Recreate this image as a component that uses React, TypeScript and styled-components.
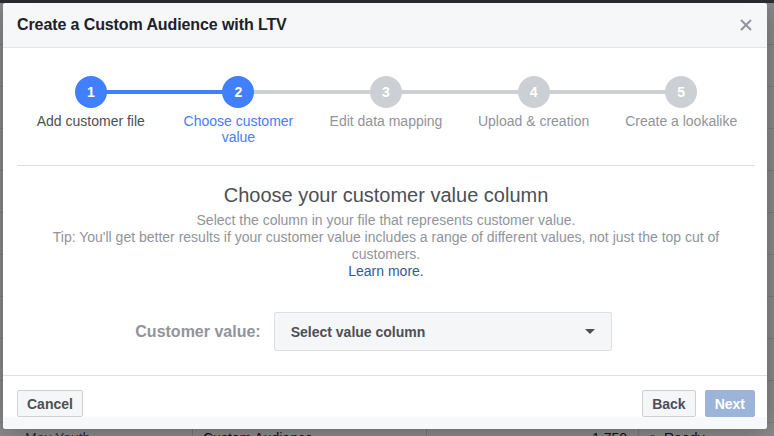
import React from "react";
import styled, { createGlobalStyle, css } from "styled-components";

type StepState = "done" | "active" | "todo";

const steps: { label: string; state: StepState }[] = [
  { label: "Add customer file", state: "done" },
  { label: "Choose customer value", state: "active" },
  { label: "Edit data mapping", state: "todo" },
  { label: "Upload & creation", state: "todo" },
  { label: "Create a lookalike", state: "todo" },
];

const backgroundRows = [
  "Lookalike (US, 1%)",
  "Website Visitors",
  "Newsletter list",
  "Lookalike (US, 2%)",
  "Customers 2017",
  "App installers",
  "Cart abandoners",
  "Lookalike (CA, 1%)",
  "Video viewers",
  "Page engagers",
];

const App = () => {
  return (
    <>
      <GlobalStyle />
      <Page>
        <TopNav />
        <Table>
          {backgroundRows.map((name) => (
            <TableRow key={name}>
              <NameCell>{name}</NameCell>
              <Cell>Custom Audience</Cell>
              <NumberCell>2,400</NumberCell>
              <Cell>Ready</Cell>
            </TableRow>
          ))}
          <TableRow>
            <NameCell>May Youth</NameCell>
            <Cell>Custom Audience</Cell>
            <NumberCell>1,750</NumberCell>
            <Cell>
              <StatusDot />
              Ready
            </Cell>
          </TableRow>
        </Table>
        <Overlay />

        <Modal>
          <Header>
            <Title>Create a Custom Audience with LTV</Title>
            <CloseButton aria-label="Close">
              <svg width="12" height="12" viewBox="0 0 12 12">
                <path d="M1 1 L11 11 M11 1 L1 11" stroke="#90949c" strokeWidth="2" />
              </svg>
            </CloseButton>
          </Header>

          <Body>
            <Stepper>
              {steps.map((step, i) => (
                <Step key={step.label} $state={step.state} $first={i === 0}>
                  <Circle $state={step.state}>{i + 1}</Circle>
                  <StepLabel $state={step.state}>{step.label}</StepLabel>
                </Step>
              ))}
            </Stepper>

            <Divider />

            <Heading>Choose your customer value column</Heading>
            <Description>
              Select the column in your file that represents customer value.
              <br />
              Tip: You'll get better results if your customer value includes a range of different
              values, not just the top cut of customers.
              <br />
              <LearnMore href="#">Learn more.</LearnMore>
            </Description>

            <FieldRow>
              <FieldLabel>Customer value:</FieldLabel>
              <SelectBox>
                <span>Select value column</span>
                <Caret />
              </SelectBox>
            </FieldRow>
          </Body>

          <Footer>
            <Button>Cancel</Button>
            <FooterRight>
              <Button>Back</Button>
              <Button $primary $disabled>
                Next
              </Button>
            </FooterRight>
          </Footer>
        </Modal>
      </Page>
    </>
  );
};

const GlobalStyle = createGlobalStyle`
  html, body {
    margin: 0;
    padding: 0;
    overflow: hidden;
  }
  body {
    font-family: "Liberation Sans", Arial, Helvetica, sans-serif;
    color: #1d2129;
  }
  * {
    box-sizing: border-box;
  }
`;

const Page = styled.div`
  position: relative;
  width: 774px;
  height: 436px;
  overflow: hidden;
  background: #ffffff;
`;

const TopNav = styled.div`
  height: 3px;
  background: #4f5763;
`;

const Table = styled.div`
  display: flex;
  flex-direction: column;
`;

const TableRow = styled.div`
  display: grid;
  grid-template-columns: 192px 234px 212px 1fr;
  height: 42px;
  border-bottom: 1px solid #e5e5e5;
  font-size: 14px;
  line-height: 16px;
`;

const Cell = styled.div`
  display: flex;
  align-items: flex-start;
  padding: 7px 10px 0;
  border-left: 1px solid #dddfe2;
  color: #1d2129;
`;

const NameCell = styled(Cell)`
  border-left: none;
  padding-left: 25px;
  color: #365899;
`;

const NumberCell = styled(Cell)`
  justify-content: flex-end;
  padding-right: 11px;
`;

const StatusDot = styled.span`
  width: 7px;
  height: 7px;
  margin: 5px 8px 0 0;
  border-radius: 50%;
  background: #42b72a;
`;

const Overlay = styled.div`
  position: absolute;
  inset: 0;
  background: rgba(0, 0, 0, 0.45);
`;

const Modal = styled.div`
  position: absolute;
  left: 3px;
  top: 3px;
  width: 764px;
  height: 426px;
  display: flex;
  flex-direction: column;
  background: #ffffff;
  border-radius: 3px;
  box-shadow: 0 2px 26px rgba(0, 0, 0, 0.3);
  overflow: hidden;
`;

const Header = styled.div`
  height: 45px;
  flex-shrink: 0;
  display: flex;
  align-items: center;
  justify-content: space-between;
  padding: 0 15px 0 14px;
  background: #f6f7f9;
  border-bottom: 1px solid #e5e5e5;
`;

const Title = styled.div`
  font-size: 16px;
  letter-spacing: -0.1px;
  font-weight: bold;
  color: #1d2129;
  margin-top: -1px;
`;

const CloseButton = styled.button`
  display: flex;
  padding: 0;
  border: none;
  background: none;
  cursor: pointer;
`;

const Body = styled.div`
  flex: 1;
  display: flex;
  flex-direction: column;
  padding: 0 12px 0 14px;
`;

const Stepper = styled.div`
  display: flex;
  padding-top: 28px;
`;

const blue = "#4080ff";
const grey = "#ccd0d5";

const Step = styled.div<{ $state: StepState; $first: boolean }>`
  position: relative;
  flex: 1;
  display: flex;
  flex-direction: column;
  align-items: center;

  ${({ $first, $state }) =>
    !$first &&
    css`
      &::before {
        content: "";
        position: absolute;
        top: 14px;
        right: 50%;
        width: 100%;
        height: 4px;
        background: ${$state === "todo" ? grey : blue};
      }
    `}
`;

const Circle = styled.div<{ $state: StepState }>`
  position: relative;
  z-index: 1;
  width: 32px;
  height: 32px;
  border-radius: 50%;
  display: flex;
  align-items: center;
  justify-content: center;
  background: ${({ $state }) => ($state === "todo" ? grey : blue)};
  color: #ffffff;
  font-size: 14px;
  font-weight: bold;
`;

const StepLabel = styled.div<{ $state: StepState }>`
  margin-top: 5px;
  padding: 0 8px;
  text-align: center;
  font-size: 14px;
  line-height: 16px;
  color: ${({ $state }) =>
    $state === "done" ? "#4b4f56" : $state === "active" ? blue : "#90949c"};
`;

const Divider = styled.div`
  height: 1px;
  margin-top: 20px;
  background: #dddfe2;
`;

const Heading = styled.div`
  margin-top: 17px;
  text-align: center;
  font-size: 20px;
  line-height: 24px;
  color: #4b4f56;
`;

const Description = styled.div`
  margin-top: 5px;
  text-align: center;
  font-size: 14px;
  line-height: 17px;
  color: #90949c;
`;

const LearnMore = styled.a`
  color: #365899;
  text-decoration: none;
`;

const FieldRow = styled.div`
  display: flex;
  align-items: center;
  justify-content: center;
  gap: 13px;
  margin-top: 32px;
  padding-right: 25px;
`;

const FieldLabel = styled.div`
  font-size: 16px;
  font-weight: bold;
  color: #90949c;
`;

const SelectBox = styled.div`
  width: 338px;
  height: 39px;
  display: flex;
  align-items: center;
  justify-content: space-between;
  padding: 0 16px 0 16px;
  background: #f5f6f7;
  border: 1px solid #dddfe2;
  border-radius: 2px;
  font-size: 14px;
  font-weight: bold;
  color: #4b4f56;
`;

const Caret = styled.span`
  width: 0;
  height: 0;
  border-left: 5px solid transparent;
  border-right: 5px solid transparent;
  border-top: 5px solid #4b4f56;
`;

const Footer = styled.div`
  height: 54px;
  flex-shrink: 0;
  display: flex;
  align-items: flex-start;
  justify-content: space-between;
  padding: 14px 12px 0 14px;
  border-top: 1px solid #dddfe2;
  background: linear-gradient(to bottom, #ffffff 0, #ffffff 40px, #f7f8f9 42px, #f7f8f9 100%);
`;

const FooterRight = styled.div`
  display: flex;
  gap: 9px;
`;

const Button = styled.button<{ $primary?: boolean; $disabled?: boolean }>`
  height: 27px;
  padding: 0 9px;
  font-family: inherit;
  font-size: 14px;
  font-weight: bold;
  border-radius: 2px;
  cursor: pointer;
  color: #4b4f56;
  background: #f5f6f7;
  border: 1px solid #ced0d4;

  ${({ $primary, $disabled }) =>
    $primary &&
    css`
      color: #ffffff;
      background: ${$disabled ? "#9cb4d8" : "#4267b2"};
      border-color: ${$disabled ? "#9cb4d8" : "#4267b2"};
      cursor: ${$disabled ? "default" : "pointer"};
    `}
`;

export default App;
